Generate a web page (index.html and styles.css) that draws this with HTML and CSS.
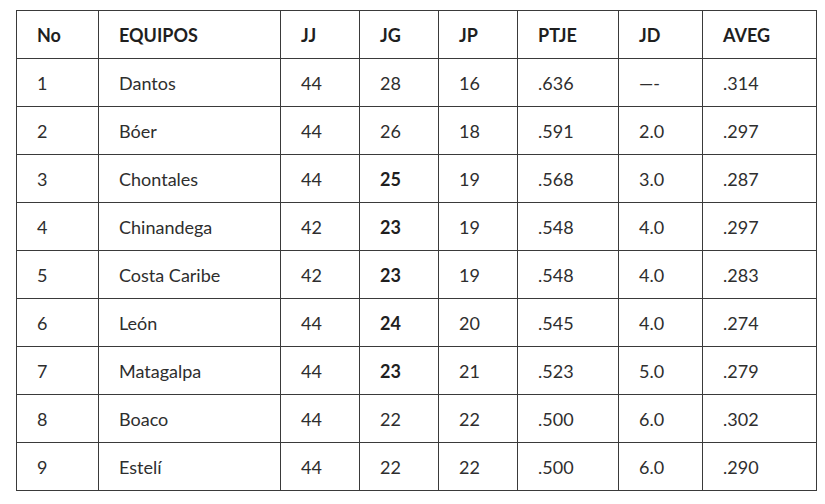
FILE: index.html
```html
<!DOCTYPE html>
<html lang="es">
<head>
<meta charset="utf-8">
<title>Tabla de posiciones</title>
<link rel="stylesheet" href="styles.css">
</head>
<body>
<table class="standings">
  <colgroup>
    <col class="c-no"><col class="c-team"><col class="c-jj"><col class="c-jg"><col class="c-jp"><col class="c-ptje"><col class="c-jd"><col class="c-aveg">
  </colgroup>
  <thead>
    <tr><th>No</th><th>EQUIPOS</th><th>JJ</th><th>JG</th><th>JP</th><th>PTJE</th><th>JD</th><th>AVEG</th></tr>
  </thead>
  <tbody>
    <tr><td>1</td><td>Dantos</td><td>44</td><td>28</td><td>16</td><td>.636</td><td>—-</td><td>.314</td></tr>
    <tr><td>2</td><td>Bóer</td><td>44</td><td>26</td><td>18</td><td>.591</td><td>2.0</td><td>.297</td></tr>
    <tr><td>3</td><td>Chontales</td><td>44</td><td class="b">25</td><td>19</td><td>.568</td><td>3.0</td><td>.287</td></tr>
    <tr><td>4</td><td>Chinandega</td><td>42</td><td class="b">23</td><td>19</td><td>.548</td><td>4.0</td><td>.297</td></tr>
    <tr><td>5</td><td>Costa Caribe</td><td>42</td><td class="b">23</td><td>19</td><td>.548</td><td>4.0</td><td>.283</td></tr>
    <tr><td>6</td><td>León</td><td>44</td><td class="b">24</td><td>20</td><td>.545</td><td>4.0</td><td>.274</td></tr>
    <tr><td>7</td><td>Matagalpa</td><td>44</td><td class="b">23</td><td>21</td><td>.523</td><td>5.0</td><td>.279</td></tr>
    <tr><td>8</td><td>Boaco</td><td>44</td><td>22</td><td>22</td><td>.500</td><td>6.0</td><td>.302</td></tr>
    <tr><td>9</td><td>Estelí</td><td>44</td><td>22</td><td>22</td><td>.500</td><td>6.0</td><td>.290</td></tr>
  </tbody>
</table>
</body>
</html>
```
FILE: styles.css
```css
html, body {
  margin: 0;
  background: #ffffff;
}
body {
  padding: 10px 0 0 16px;
  font-family: Lato, "Open Sans", sans-serif;
  color: #2e2e2e;
}
.standings {
  border-collapse: collapse;
  table-layout: fixed;
  width: 800px;
  font-size: 18px;
}
.c-no { width: 82px; }
.c-team { width: 182px; }
.c-jj { width: 79px; }
.c-jg { width: 79px; }
.c-jp { width: 79px; }
.c-ptje { width: 101px; }
.c-jd { width: 84px; }
.c-aveg { width: 114px; }
.standings th,
.standings td {
  border: 1px solid #3a3a3a;
  height: 48px;
  padding: 0 0 0 20px;
  text-align: left;
  vertical-align: middle;
  box-sizing: border-box;
  line-height: 1;
}
.standings th {
  font-weight: 700;
  color: #1f1f1f;
}
.standings td {
  font-weight: 400;
}
.standings td.b {
  font-weight: 700;
  color: #1f1f1f;
}
```
